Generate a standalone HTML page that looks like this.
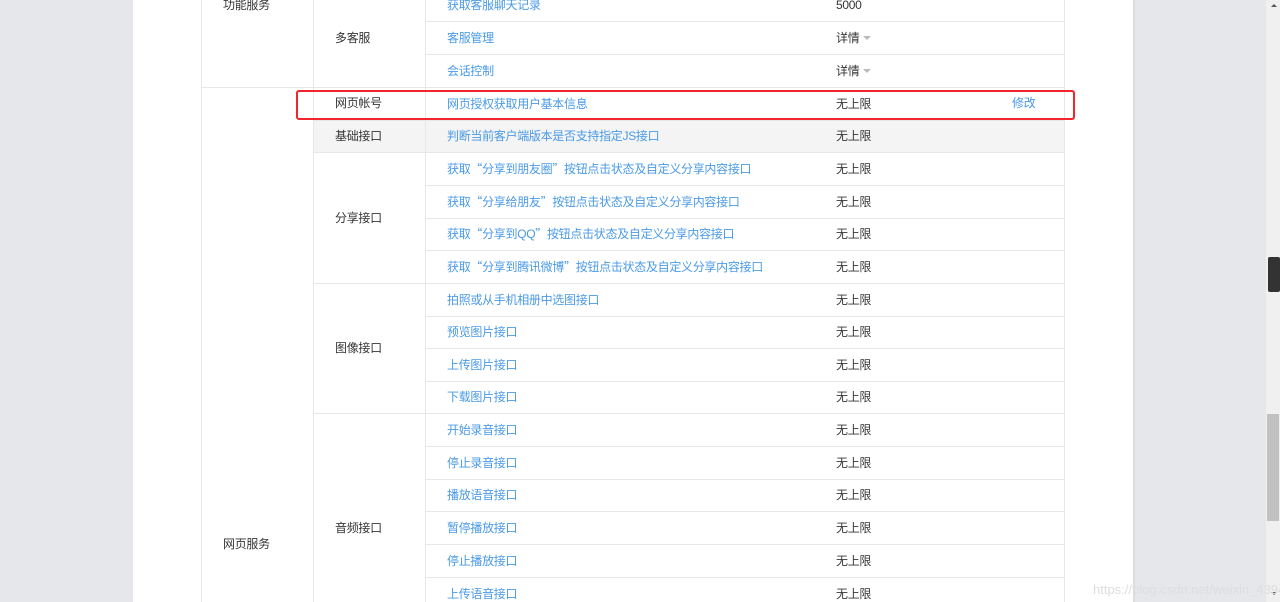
<!DOCTYPE html><html><head><meta charset="utf-8"><style>
body{margin:0;width:1280px;height:602px;overflow:hidden;background:#e6e7ea;font-family:"Liberation Sans","Noto Sans CJK SC",sans-serif;font-size:12px;letter-spacing:-0.3px;color:#353535;position:relative}
.a{position:absolute}
.w{left:133px;top:0;width:1000px;height:602px;background:#fff;border-right:2px solid #ddd}
.h{height:1px;background:#e7e7e7}
.v{width:1px;background:#e7e7e7}
.t{line-height:16px;white-space:nowrap}
.l{color:#4a9ae6}
.q{font-family:"Noto Sans CJK SC",sans-serif}
.tri{display:inline-block;width:0;height:0;border-left:4px solid transparent;border-right:4px solid transparent;border-top:4px solid #bbb;margin-left:4px;vertical-align:middle}
</style></head><body>
<div class="a w"></div>
<div class="a" style="left:313px;top:120px;width:751px;height:32px;background:#f4f4f4"></div>
<div class="a v" style="left:201px;top:0;height:602px"></div>
<div class="a v" style="left:313px;top:0;height:602px"></div>
<div class="a v" style="left:425px;top:0;height:602px"></div>
<div class="a v" style="left:1064px;top:0;height:602px"></div>
<div class="a h" style="left:201px;top:87px;width:863px"></div>
<div id="lines"></div>
<div class="a" style="left:1266px;top:0;width:14px;height:602px;background:#f0f0f0"></div>
<div class="a" style="left:1267px;top:414px;width:12px;height:107px;background:#c1c1c1"></div>
<div class="a" style="left:1268px;top:257px;width:12px;height:35px;background:#333;border-radius:2px"></div>
<div class="a" style="left:1271px;top:4px;width:0;height:0;border-left:3px solid transparent;border-right:3px solid transparent;border-bottom:3px solid #555"></div>
<div class="a" style="left:1271px;top:592px;width:0;height:0;border-left:3px solid transparent;border-right:3px solid transparent;border-top:3px solid #555"></div>
<div class="a t" style="left:1093px;top:582px;color:#ddd;font-size:13px;letter-spacing:0">https://blog.csdn.net/weixin_43944305</div>
<div class="a" style="left:296px;top:90px;width:775px;height:26px;border:2px solid #f0262a;border-radius:3px"></div>
<script>
var B=[-12,21,54,87,120,152,185,218,250,283,316,348,381,413,446,479,511,544,577,610];
var R=[["获取客服聊天记录","5000"],["客服管理","详情"],["会话控制","详情"],["网页授权获取用户基本信息","无上限"],["判断当前客户端版本是否支持指定JS接口","无上限"],["获取“分享到朋友圈”按钮点击状态及自定义分享内容接口","无上限"],["获取“分享给朋友”按钮点击状态及自定义分享内容接口","无上限"],["获取“分享到QQ”按钮点击状态及自定义分享内容接口","无上限"],["获取“分享到腾讯微博”按钮点击状态及自定义分享内容接口","无上限"],["拍照或从手机相册中选图接口","无上限"],["预览图片接口","无上限"],["上传图片接口","无上限"],["下载图片接口","无上限"],["开始录音接口","无上限"],["停止录音接口","无上限"],["播放语音接口","无上限"],["暂停播放接口","无上限"],["停止播放接口","无上限"],["上传语音接口","无上限"]];
var G={3:1,4:1,5:1,9:1,13:1};
var h="";
for(var i=0;i<R.length;i++){var y=(B[i]+B[i+1])/2-8;
var s=R[i][0].replace(/“/g,'<span class="q">“</span>').replace(/”/g,'<span class="q">”</span>');
h+='<div class="a t l" style="left:447px;top:'+y+'px">'+s+'</div>';
h+='<div class="a t" style="left:836px;top:'+y+'px">'+R[i][1]+(R[i][1]=="详情"?'<span class="tri"></span>':'')+'</div>';
if(i>0&&B[i]!=87)h+='<div class="a h" style="left:'+(G[i]?313:425)+'px;top:'+B[i]+'px;width:'+(G[i]?751:639)+'px"></div>';}
var C=[["功能服务",5],["多客服",38],["网页帐号",103],["基础接口",136],["分享接口",218],["图像接口",348],["音频接口",528]];
for(var j=0;j<C.length;j++)h+='<div class="a t" style="left:'+(j==0?223:335)+'px;top:'+(C[j][1]-8)+'px">'+C[j][0]+'</div>';
h+='<div class="a t" style="left:223px;top:536px">网页服务</div>';
h+='<div class="a t l" style="left:1012px;top:95px">修改</div>';
h+='<div class="a h" style="left:313px;top:87px;width:751px"></div>';
document.getElementById("lines").innerHTML=h;
</script>
</body></html>
